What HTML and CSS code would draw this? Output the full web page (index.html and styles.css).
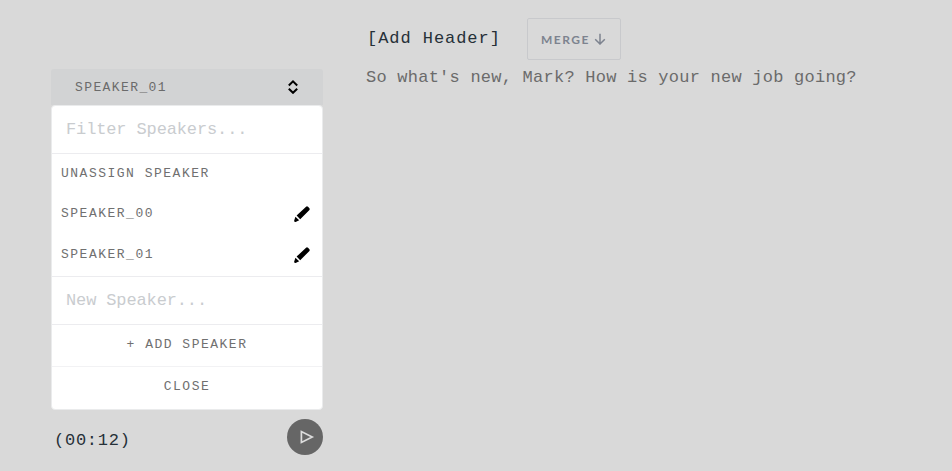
FILE: index.html
```
<!DOCTYPE html>
<html lang="en">
<head>
<meta charset="utf-8">
<title>Transcript</title>
<link rel="stylesheet" href="styles.css">
</head>
<body>
<main class="transcript">
  <aside class="side">
    <div class="select"><span>SPEAKER_01</span>
      <svg class="chevrons" width="12" height="14" viewBox="0 0 12 14"><path d="M1.8 5.5 6 1.4l4.2 4.1M1.8 8.7 6 12.8l4.2-4.1"/></svg>
    </div>
    <div class="menu">
      <div class="field">Filter Speakers...</div>
      <div class="options">
        <div class="option unassign">UNASSIGN SPEAKER</div>
        <div class="option"><span>SPEAKER_00</span>
          <svg class="pencil" width="16" height="16" viewBox="0 0 16 16"><path d="M2.6 9.6 11.8.9Q13-.1 14 .8l1.2 1.2q1 1.2 0 2.2L6.2 13.2ZM1.4 10.8l3.8 3.4L1.6 15.9Q0 16 .2 14.6Z"/></svg>
        </div>
        <div class="option"><span>SPEAKER_01</span>
          <svg class="pencil" width="16" height="16" viewBox="0 0 16 16"><path d="M2.6 9.6 11.8.9Q13-.1 14 .8l1.2 1.2q1 1.2 0 2.2L6.2 13.2ZM1.4 10.8l3.8 3.4L1.6 15.9Q0 16 .2 14.6Z"/></svg>
        </div>
      </div>
      <div class="field new">New Speaker...</div>
      <div class="action">+ ADD SPEAKER</div>
      <div class="action close">CLOSE</div>
    </div>
    <div class="playback">
      <span class="time">(00:12)</span>
      <div class="play"><svg width="16" height="16" viewBox="0 0 16 16"><path d="M2.4 2.6v10.8L13.2 8Z"/></svg></div>
    </div>
  </aside>
  <section class="content">
    <div class="heading">
      <span class="title">[Add Header]</span>
      <div class="merge"><span>MERGE</span><svg width="12" height="12" viewBox="0 0 12 12"><path d="M6 .8v10M1.2 6.2 6 11l4.8-4.8"/></svg></div>
    </div>
    <p class="text">So what's new, Mark? How is your new job going?</p>
  </section>
</main>
</body>
</html>
```
FILE: styles.css
```
* { box-sizing: border-box; }
body {
  margin: 0;
  background: #d9d9d9;
  font-family: "Liberation Mono", monospace;
}
svg { display: block; fill: none; }
.transcript { display: flex; height: 471px; padding-left: 51px; overflow: hidden; }
.side { width: 272px; padding-top: 69px; }
.select {
  display: flex; align-items: center; justify-content: space-between;
  height: 36px; padding: 0 24px;
  background: #d2d3d4; border-radius: 3px 3px 0 0;
  color: #6b6b6b; font-size: 13px; letter-spacing: 1.4px;
}
.chevrons { stroke: #000; stroke-width: 2; }
.menu {
  height: 305px; background: #fff; border: 1px solid #eaebec; border-radius: 4px;
  color: #707070; font-size: 13px; letter-spacing: 1.5px;
}
.field {
  height: 48px; padding: 0 14px; line-height: 47px;
  border-bottom: 1px solid #ececef;
  color: #c9cccf; font-size: 17px; letter-spacing: -.13px;
}
.options { height: 123px; border-bottom: 1px solid #ececef; }
.option {
  display: flex; align-items: center; justify-content: space-between;
  height: 41px; padding: 0 12px 0 9px;
}
.unassign { height: 39px; }
.pencil { fill: #000; }
.action { height: 42px; line-height: 40px; text-align: center; border-bottom: 1px solid #f2f2f4; }
.close { border-bottom: 0; }
.playback { display: flex; justify-content: space-between; height: 45px; padding-top: 9px; }
.time { padding: 10px 0 0 3px; color: #263038; font-size: 17px; letter-spacing: .75px; line-height: 24px; }
.play { display: grid; place-items: center; width: 36px; height: 36px; padding-left: 3px; border-radius: 50%; background: #666; }
.play path { stroke: #ddd; stroke-width: 1.7; }
.content { padding: 18px 0 0 43px; }
.heading { display: flex; align-items: flex-start; }
.title { width: 161px; padding-left: 1px; color: #263038; font-size: 17px; letter-spacing: .95px; line-height: 42px; }
.merge {
  display: flex; align-items: center; gap: 4px;
  width: 94px; height: 42px; padding: 0 0 0 13px;
  border: 1px solid #c8c9cc; border-radius: 2px;
  color: #7d838f; font: 700 12px Lato, sans-serif; letter-spacing: 1.5px;
}
.merge svg { stroke: #7d838f; stroke-width: 1.5; }
.text { margin: 6px 0 0; color: #6b6b6b; font-size: 17px; letter-spacing: .24px; line-height: 24px; white-space: nowrap; }
```
